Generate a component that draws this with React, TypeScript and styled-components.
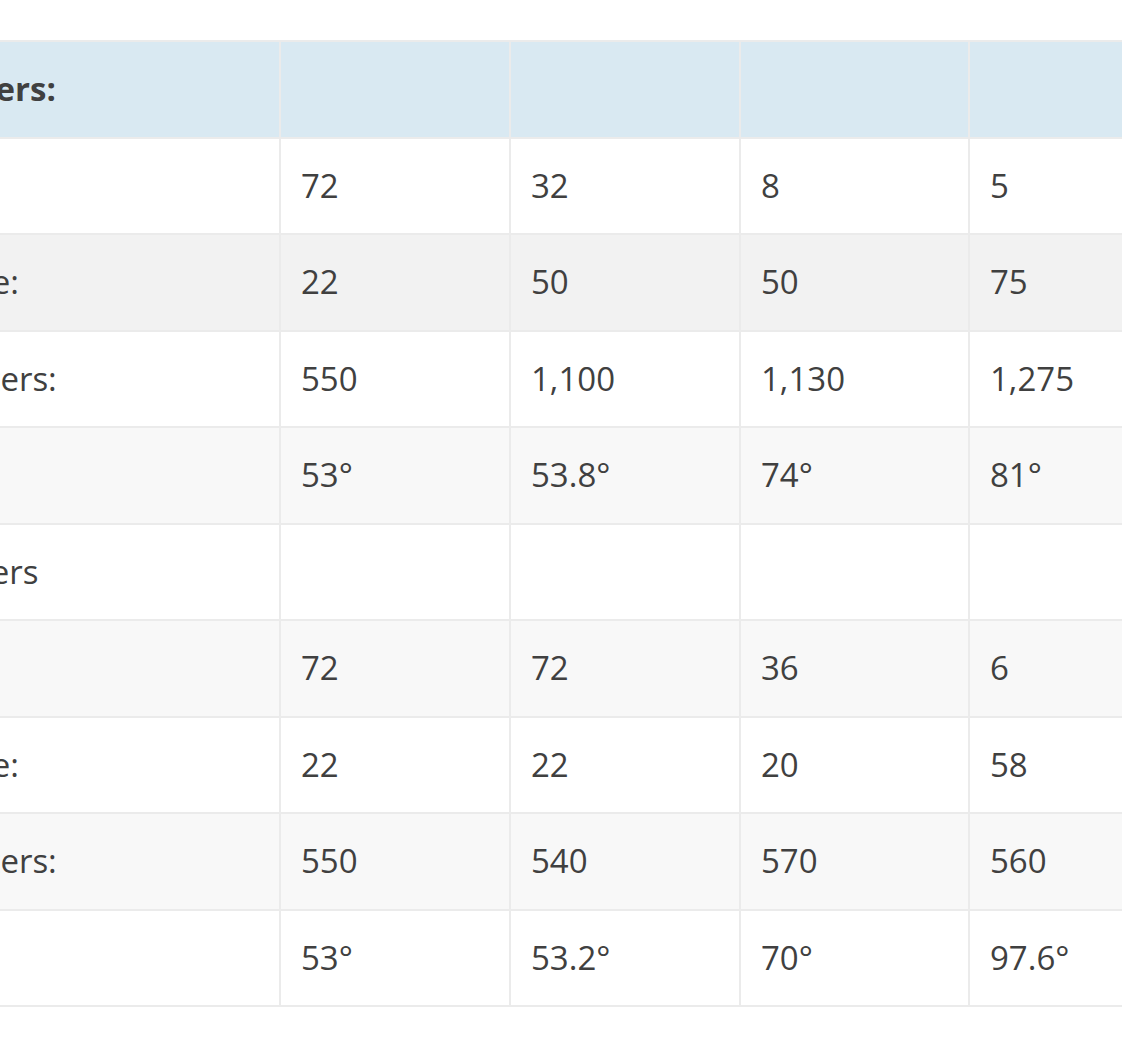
import React from "react";
import styled, { createGlobalStyle } from "styled-components";

const GlobalStyle = createGlobalStyle`
  html, body {
    margin: 0;
    padding: 0;
    background: #ffffff;
    overflow: hidden;
  }
  body {
    font-family: "Open Sans", "Noto Sans", sans-serif;
    color: #404040;
  }
`;

const Page = styled.div`
  padding-top: 40px;
  width: 1122px;
  overflow: hidden;
`;

const Table = styled.table`
  border-collapse: collapse;
  table-layout: fixed;
  width: 1561px;
  margin-left: -363px;
  font-size: 33px;
  line-height: 46.5px;
  color: #404040;
`;

const Cell = styled.td<{ $head?: boolean }>`
  border: 2px solid #ebebeb;
  padding: 24px 20px;
  white-space: nowrap;
  vertical-align: middle;
  text-align: left;
  font-weight: ${(p) => (p.$head ? 700 : 400)};
`;

const Row = styled.tr<{ $bg: string }>`
  background: ${(p) => p.$bg};
`;

type RowData = { label: string; values: string[]; bg: string; head?: boolean };

const rows: RowData[] = [
  { label: "Searchlight parameters:", values: ["", "", "", ""], bg: "#d9e9f2", head: true },
  { label: "Number of LEDs:", values: ["72", "32", "8", "5"], bg: "#ffffff" },
  { label: "Power of a single piece:", values: ["22", "50", "50", "75"], bg: "#f2f2f2" },
  { label: "Throw distance in meters:", values: ["550", "1,100", "1,130", "1,275"], bg: "#ffffff" },
  { label: "Beam angle:", values: ["53°", "53.8°", "74°", "81°"], bg: "#f8f8f8" },
  { label: "With a lens and diffusers", values: ["", "", "", ""], bg: "#ffffff" },
  { label: "Number of LEDs:", values: ["72", "72", "36", "6"], bg: "#f8f8f8" },
  { label: "Power of a single piece:", values: ["22", "22", "20", "58"], bg: "#ffffff" },
  { label: "Throw distance in meters:", values: ["550", "540", "570", "560"], bg: "#f8f8f8" },
  { label: "Beam angle:", values: ["53°", "53.2°", "70°", "97.6°"], bg: "#ffffff" },
];

const widths = [642, 230, 230, 229, 230];

export default function App() {
  return (
    <>
      <GlobalStyle />
      <Page>
        <Table>
          <colgroup>
            {widths.map((w, i) => (
              <col key={i} style={{ width: w }} />
            ))}
          </colgroup>
          <tbody>
            {rows.map((r, i) => (
              <Row key={i} $bg={r.bg}>
                <Cell $head={r.head}>{r.label}</Cell>
                {r.values.map((v, j) => (
                  <Cell key={j} $head={r.head}>
                    {v}
                  </Cell>
                ))}
              </Row>
            ))}
          </tbody>
        </Table>
      </Page>
    </>
  );
}
